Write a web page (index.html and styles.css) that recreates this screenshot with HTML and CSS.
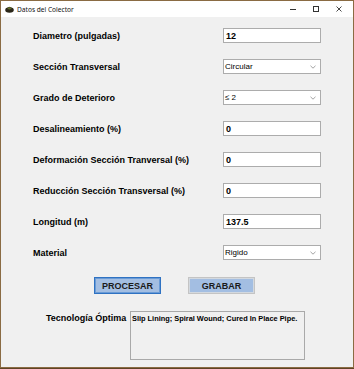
FILE: index.html
```html
<!DOCTYPE html>
<html lang="es">
<head>
    <meta charset="UTF-8">
    <meta name="viewport" content="width=device-width, initial-scale=1.0">
    <title>Datos del Colector</title>
    <link rel="stylesheet" href="styles.css">
</head>
<body>
    <div class="window">
        <div class="titlebar">
            <svg class="app-icon" width="9" height="8" viewBox="0 0 9 8">
                <ellipse cx="4.5" cy="5" rx="4.3" ry="2.7" fill="#2a2618"/>
                <path d="M1.3 4.8 Q4.5 -1.2 7.7 4.8 Z" fill="#36301f"/>
                <ellipse cx="4.5" cy="3.3" rx="2" ry="1.1" fill="#5f6e28"/>
            </svg>
            <span class="title">Datos del Colector</span>
            <div class="controls">
                <svg width="8" height="8" viewBox="0 0 8 8"><line x1="1" y1="4.5" x2="7" y2="4.5" stroke="#333" stroke-width="1"/></svg>
                <svg width="8" height="8" viewBox="0 0 8 8"><rect x="1.5" y="1.5" width="5" height="5" fill="none" stroke="#333" stroke-width="1"/></svg>
                <svg width="8" height="8" viewBox="0 0 8 8"><path d="M1.5 1.5 L6.5 6.5 M6.5 1.5 L1.5 6.5" stroke="#333" stroke-width="0.9"/></svg>
            </div>
        </div>
        <div class="client">
            <div class="form">
                <div class="row">
                    <label>Diametro (pulgadas)</label>
                    <div class="field text">12</div>
                </div>
                <div class="row">
                    <label>Sección Transversal</label>
                    <div class="field select">Circular<svg class="chev" width="6" height="4" viewBox="0 0 6 4"><polyline points="0.5,0.8 3,3.2 5.5,0.8" fill="none" stroke="#8a8a8a" stroke-width="0.8"/></svg></div>
                </div>
                <div class="row">
                    <label>Grado de Deterioro</label>
                    <div class="field select">≤ 2<svg class="chev" width="6" height="4" viewBox="0 0 6 4"><polyline points="0.5,0.8 3,3.2 5.5,0.8" fill="none" stroke="#8a8a8a" stroke-width="0.8"/></svg></div>
                </div>
                <div class="row">
                    <label>Desalineamiento (%)</label>
                    <div class="field text">0</div>
                </div>
                <div class="row">
                    <label>Deformación Sección Tranversal (%)</label>
                    <div class="field text">0</div>
                </div>
                <div class="row">
                    <label>Reducción Sección Transversal (%)</label>
                    <div class="field text">0</div>
                </div>
                <div class="row">
                    <label>Longitud (m)</label>
                    <div class="field text">137.5</div>
                </div>
                <div class="row">
                    <label>Material</label>
                    <div class="field select">Rigido<svg class="chev" width="6" height="4" viewBox="0 0 6 4"><polyline points="0.5,0.8 3,3.2 5.5,0.8" fill="none" stroke="#8a8a8a" stroke-width="0.8"/></svg></div>
                </div>
            </div>
            <div class="buttons">
                <button class="btn focused">PROCESAR</button>
                <button class="btn">GRABAR</button>
            </div>
            <div class="result">
                <label>Tecnología Óptima</label>
                <div class="memo">Slip Lining; Spiral Wound; Cured In Place Pipe.</div>
            </div>
        </div>
    </div>
</body>
</html>
```

FILE: styles.css
```css
body, html {
    margin: 0;
    padding: 0;
    background: #5e4426;
    font-family: "Liberation Sans", Arial, sans-serif;
}
.window {
    width: 352px;
    height: 366px;
    border: 1px solid #8a6b43;
    background: #f0f0f0;
    display: flex;
    flex-direction: column;
}
.titlebar {
    height: 16px;
    background: #fff;
    display: flex;
    align-items: center;
    padding-left: 4px;
}
.app-icon {
    margin-right: 3px;
}
.title {
    font-family: "Noto Sans", sans-serif;
    font-size: 6.6px;
    color: #111;
}
.controls {
    margin-left: auto;
    display: flex;
    gap: 15px;
    margin-right: 10px;
}
.client {
    flex: 1;
    display: flex;
    flex-direction: column;
}
.form {
    padding-top: 3px;
}
.row {
    height: 31px;
    display: flex;
    align-items: center;
}
label {
    font-weight: bold;
    font-size: 9px;
    color: #000;
}
.row label {
    width: 190px;
    padding-left: 32px;
}
.field {
    width: 94px;
    height: 13px;
    background: #fff;
    border: 1px solid #acacac;
    display: flex;
    align-items: center;
    padding-left: 2px;
    box-sizing: content-box;
    font-size: 9px;
    color: #000;
}
.field.text {
    font-weight: bold;
}
.field.select {
    font-size: 8px;
    padding-left: 1px;
    width: 95px;
}
.chev {
    margin-left: auto;
    margin-right: 4px;
}
.buttons {
    display: flex;
    gap: 27px;
    margin-top: 9px;
    padding-left: 93px;
}
.btn {
    width: 67px;
    height: 17px;
    padding: 0;
    background: #a3bee2;
    border: 1px solid #c4c4c4;
    box-shadow: inset 0 0 0 1px #d3d9e0;
    font-family: "Liberation Sans", Arial, sans-serif;
    font-weight: bold;
    font-size: 9px;
    color: #1a1a1a;
}
.btn.focused {
    border-color: #2f72c2;
    box-shadow: inset 0 0 0 1px #6a9bd6;
}
.result {
    display: flex;
    margin-top: 17px;
    padding-left: 45px;
}
.result label {
    width: 84px;
    padding-top: 2px;
}
.memo {
    width: 171px;
    height: 43px;
    border: 1px solid #a9a9a9;
    padding: 2px 1px;
    font-weight: bold;
    font-size: 7.4px;
    color: #000;
    white-space: nowrap;
}
```
